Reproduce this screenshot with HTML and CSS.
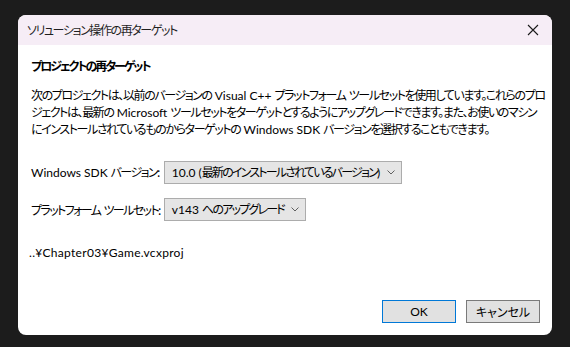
FILE: index.html
```html
<!DOCTYPE html>
<html lang="ja">
<head>
  <meta charset="UTF-8" />
  <title>ソリューション操作の再ターゲット</title>
  <link rel="stylesheet" href="styles.css">
</head>
<body>
  <div class="dialog">
    <div class="titlebar">
      <span class="title">ソリューション操作の再ターゲット</span>
      <button class="close" aria-label="閉じる">
        <svg width="12" height="12" viewBox="0 0 12 12"><path d="M1 1L11 11M11 1L1 11" stroke="#1a1a1a" stroke-width="1.1" fill="none"/></svg>
      </button>
    </div>

    <div class="body">
      <h1 class="heading">プロジェクトの再ターゲット</h1>
      <p class="desc">
        <span>次のプロジェクトは、以前のバージョンの<span class="en"> Visual C++ </span>プラットフォーム ツールセットを使用しています。これらのプロ</span>
        <span>ジェクトは、最新の<span class="en"> Microsoft </span>ツールセットをターゲットとするようにアップグレードできます。また、お使いのマシン</span>
        <span>にインストールされているものからターゲットの<span class="en"> Windows SDK </span>バージョンを選択することもできます。</span>
      </p>

      <div class="form">
        <label class="label"><span class="en">Windows SDK </span>バージョン:</label>
        <div class="select">
          <span><span class="en">10.0 (</span>最新のインストールされているバージョン<span class="en">)</span></span>
          <svg class="chev" width="8" height="5" viewBox="0 0 8 5"><path d="M0.5 0.5L4 4L7.5 0.5" stroke="#606060" fill="none"/></svg>
        </div>
        <label class="label">プラットフォーム ツールセット:</label>
        <div class="select">
          <span><span class="en">v143 </span>へのアップグレード</span>
          <svg class="chev" width="8" height="5" viewBox="0 0 8 5"><path d="M0.5 0.5L4 4L7.5 0.5" stroke="#606060" fill="none"/></svg>
        </div>
      </div>

      <div class="path en">..¥Chapter03¥Game.vcxproj</div>

      <div class="buttons">
        <button class="btn default"><span class="en">OK</span></button>
        <button class="btn">キャンセル</button>
      </div>
    </div>
  </div>
</body>
</html>
```

FILE: styles.css
```css
* {
  margin: 0;
  padding: 0;
  box-sizing: border-box;
}
body {
  background: #1c1c1c;
  padding: 15px 18px;
  font-family: "Noto Sans CJK JP", sans-serif;
  font-feature-settings: "palt";
  font-size: 12px;
  line-height: 16px;
  letter-spacing: -1.4px;
  word-spacing: 2px;
  color: #000;
}
/* latin runs: no squeeze */
.en {
  font-family: "Lato", "Noto Sans CJK JP", sans-serif;
  letter-spacing: 0;
  word-spacing: 0;
}

.dialog {
  width: 534px;
  height: 320px;
  background: #fff;
  border-radius: 8px;
  overflow: hidden;
  display: flex;
  flex-direction: column;
}

.titlebar {
  height: 30px;
  background: #f6edf6;
  display: flex;
  align-items: center;
  justify-content: space-between;
  padding-left: 9px;
}
.title {
  color: #1f1f1f;
}
.close {
  width: 30px;
  height: 30px;
  border: none;
  background: transparent;
  display: flex;
  align-items: center;
  justify-content: center;
  margin-right: 4px;
}

.body {
  flex: 1;
  display: flex;
  flex-direction: column;
  padding: 13px 12px 12px 13px;
}
.heading {
  font-size: 12px;
  font-weight: 700;
  letter-spacing: -2px;
}
.desc {
  margin-top: 13px;
}
.desc > span {
  display: block;
  white-space: nowrap;
}

.form {
  margin-top: 23px;
  display: grid;
  grid-template-columns: auto auto;
  justify-content: start;
  justify-items: start;
  align-items: center;
  column-gap: 4px;
  row-gap: 14px;
}
.label {
  white-space: nowrap;
  letter-spacing: -1.6px;
}
.select {
  height: 23px;
  background: #e5e5e5;
  border: 1px solid #acacac;
  display: flex;
  align-items: center;
  padding: 0 6px 0 7px;
  white-space: nowrap;
  letter-spacing: -1.8px;
}
.chev {
  margin-left: 7px;
  flex: none;
}

.path {
  margin-top: 24px;
  margin-left: -2px;
  letter-spacing: 0.3px;
}

.buttons {
  margin-top: auto;
  display: flex;
  justify-content: flex-end;
  gap: 10px;
}
.btn {
  width: 74px;
  height: 23px;
  background: #e1e1e1;
  border: 1px solid #7a7a7a;
  font: inherit;
  color: #000;
}
.btn.default {
  border-color: #0078d7;
}
```
